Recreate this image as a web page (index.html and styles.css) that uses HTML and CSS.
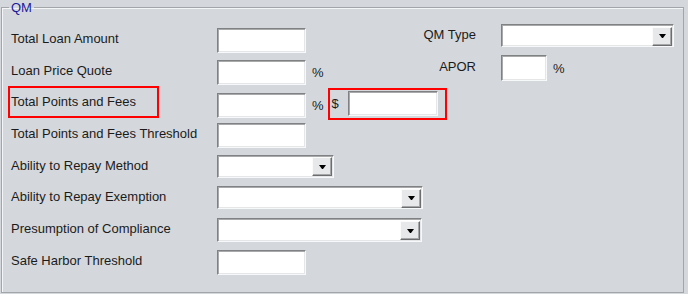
FILE: index.html
```html
<!DOCTYPE html>
<html lang="en">
<head>
    <meta charset="UTF-8">
    <meta name="viewport" content="width=device-width, initial-scale=1.0">
    <title>QM</title>
    <link rel="stylesheet" href="styles.css">
</head>
<body>
    <fieldset class="qm">
        <legend>QM</legend>
        <div class="qm-grid">
            <!-- Row 1 -->
            <label class="lbl">Total Loan Amount</label>
            <div class="field"><input class="box" type="text"></div>
            <label class="lbl-r">QM Type</label>
            <div class="field-r"><span class="combo qm-type"><span class="drop"></span></span></div>

            <!-- Row 2 -->
            <label class="lbl">Loan Price Quote</label>
            <div class="field"><input class="box" type="text"><span class="unit">%</span></div>
            <label class="lbl-r">APOR</label>
            <div class="field-r"><input class="box apor" type="text"><span class="unit">%</span></div>

            <!-- Row 3 -->
            <label class="lbl"><span class="mark mark-label">Total Points and Fees</span></label>
            <div class="field wide">
                <input class="box" type="text"><span class="unit">%</span>
                <span class="mark mark-amount">$<input class="box amount" type="text"></span>
            </div>

            <!-- Row 4 -->
            <label class="lbl">Total Points and Fees Threshold</label>
            <div class="field wide"><input class="box" type="text"></div>

            <!-- Row 5 -->
            <label class="lbl">Ability to Repay Method</label>
            <div class="field wide"><span class="combo repay-method"><span class="drop"></span></span></div>

            <!-- Row 6 -->
            <label class="lbl">Ability to Repay Exemption</label>
            <div class="field wide"><span class="combo repay-exemption"><span class="drop"></span></span></div>

            <!-- Row 7 -->
            <label class="lbl">Presumption of Compliance</label>
            <div class="field wide"><span class="combo compliance"><span class="drop"></span></span></div>

            <!-- Row 8 -->
            <label class="lbl">Safe Harbor Threshold</label>
            <div class="field wide"><input class="box" type="text"></div>
        </div>
    </fieldset>
</body>
</html>
```

FILE: styles.css
```css
body {
    font-family: "Liberation Sans", Arial, sans-serif;
    font-size: 13px;
    line-height: 15px;
    color: #1b1b1b;
    margin: 0;
    background-color: #d4d8dc;
}
.qm {
    margin: 0 4px 1px 1px;
    padding: 0 0 10px 7px;
    border: 1px solid #a3a6a9;
    box-shadow: inset 1px 1px 0 #f4f5f6;
}
.qm legend {
    padding: 0 2px;
    color: #1a1a99;
}
.qm-grid {
    display: grid;
    grid-template-columns: 206px 193px 91px 1fr;
    grid-auto-rows: 31.7px;
    align-items: start;
    padding: 13px 0 0 2px;
}
.lbl {
    padding-top: 3px;
    white-space: nowrap;
}
.lbl-r {
    margin-top: -1px;
    padding-right: 25px;
    text-align: right;
}
.field {
    display: flex;
    align-items: center;
}
.field.wide {
    grid-column: 2 / 5;
}
.field-r {
    display: flex;
    align-items: center;
    margin-top: -4px;
}
.box {
    box-sizing: border-box;
    width: 89px;
    height: 25px;
    margin: 0;
    padding: 0;
    background: #fff;
    border: 1px solid;
    border-color: #7f8183 #f7f8f9 #f7f8f9 #7f8183;
    box-shadow: inset 1px 1px 0 #a7a9ab, inset -1px -1px 0 #e4e6e8;
    outline: none;
}
.box.apor {
    width: 46px;
    height: 26px;
    margin-top: -1px;
}
.box.amount {
    width: 90px;
    margin-left: 9px;
}
.unit {
    margin-left: 6px;
}
.mark {
    border: 2px solid #f00;
}
.mark-label {
    display: block;
    box-sizing: border-box;
    width: 151px;
    margin: -8px 0 0 -3px;
    padding: 6px 0 7px 1px;
}
.mark-amount {
    display: flex;
    align-items: center;
    margin: -3px 0 0 4px;
    padding: 1px 7px 2px 2px;
}
.combo {
    display: flex;
    justify-content: flex-end;
    align-items: center;
    box-sizing: border-box;
    height: 23px;
    padding-right: 1px;
    background: #fff;
    border: 1px solid;
    border-color: #7f8183 #f7f8f9 #f7f8f9 #7f8183;
    box-shadow: inset 1px 1px 0 #a7a9ab, inset -1px -1px 0 #e4e6e8;
}
.combo.qm-type {
    width: 173px;
}
.combo.repay-method {
    width: 117px;
}
.combo.repay-exemption {
    width: 206px;
}
.combo.compliance {
    width: 205px;
    height: 24px;
}
.drop {
    display: flex;
    justify-content: center;
    align-items: center;
    box-sizing: border-box;
    width: 20px;
    height: 19px;
    margin-top: 1px;
    background: #e6e8ea;
    border: 1px solid;
    border-color: #fbfbfb #6b6d6f #6b6d6f #fbfbfb;
    box-shadow: inset -1px -1px 0 #a4a6a8;
}
.drop::after {
    content: "";
    width: 1px;
    height: 0;
    border-top: 4px solid #000;
    border-left: 3px solid transparent;
    border-right: 3px solid transparent;
}
```
